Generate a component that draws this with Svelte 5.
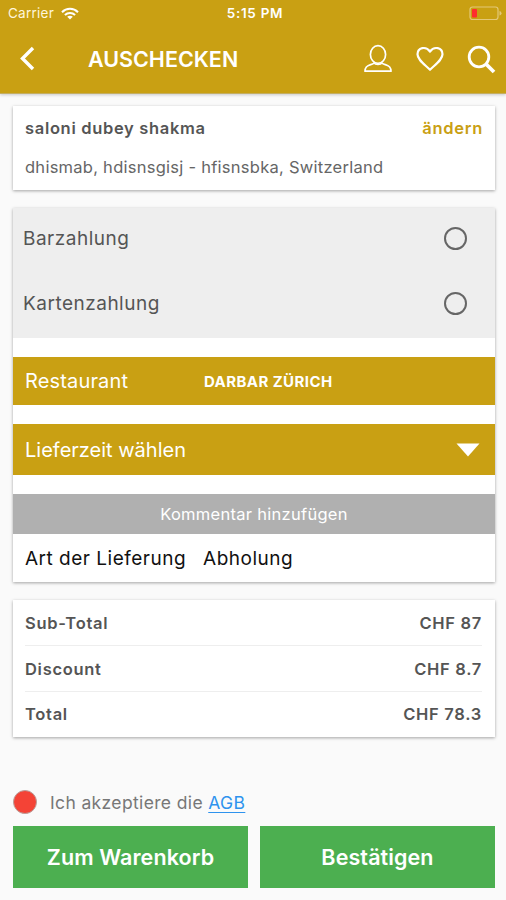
<script lang="ts">
  let payment = $state("");
  let accepted = $state(false);

  const payments = ["Barzahlung", "Kartenzahlung"];

  const totals = [
    { label: "Sub-Total", value: "CHF 87" },
    { label: "Discount", value: "CHF 8.7" },
    { label: "Total", value: "CHF 78.3" },
  ];
</script>

<div class="screen">
  <header>
    <div class="status">
      <div class="carrier">
        <span>Carrier</span>
        <svg width="18" height="13" viewBox="0 0 18 13" fill="none" stroke="#fff" stroke-width="2">
          <path d="M1 5.2C5.4 .7 12.6 .7 17 5.2" />
          <path d="M3.9 8C6.8 5.2 11.2 5.2 14.1 8" />
          <path d="M9 12.4 6.2 9.7C7.8 8.3 10.2 8.3 11.8 9.7Z" fill="#fff" stroke="none" />
        </svg>
      </div>
      <strong class="time">5:15 PM</strong>
      <svg class="battery" width="33" height="15" viewBox="0 0 33 15">
        <rect x="1" y="1" width="28" height="12.5" rx="2.5" fill="none" stroke="#e3c878" stroke-width="1.2" />
        <rect x="3" y="3" width="5" height="8.5" rx="1" fill="#ff2d2d" />
        <path d="M30.5 5v4.5q2-.6 2-2.25T30.5 5Z" fill="#e3c878" />
      </svg>
    </div>

    <div class="toolbar">
      <button class="back" aria-label="Zurück">
        <svg width="16" height="26" viewBox="0 0 16 26" fill="none" stroke="#fff" stroke-width="3.4">
          <path d="M13 2 2.500 12.500l10.500 10.500" />
        </svg>
      </button>
      <h1>AUSCHECKEN</h1>
      <nav>
        <button aria-label="Profil">
          <svg width="30" height="30" viewBox="0 0 30 30" fill="none" stroke="#fff" stroke-width="1.700">
            <ellipse cx="15" cy="10.500" rx="7.600" ry="8.800" />
            <path d="M11 19C9 21.500 2 20 2 27.200H28C28 20 21 21.500 19 19C17.500 20.800 12.500 20.800 11 19Z" stroke-linejoin="round" />
          </svg>
        </button>
        <button aria-label="Favoriten">
          <svg width="30" height="26" viewBox="0 0 30 26" fill="none" stroke="#fff" stroke-width="2.200">
            <path d="M15 23.800C9 18 2.500 13.500 2.500 8.300C2.500 1.400 11 -.2 15 5.500C19 -.2 27.500 1.400 27.500 8.300C27.500 13.500 21 18 15 23.800Z" stroke-linejoin="round" />
          </svg>
        </button>
        <button aria-label="Suche">
          <svg width="29" height="29" viewBox="0 0 29 29" fill="none" stroke="#fff">
            <circle cx="12" cy="12" r="9.800" stroke-width="2.800" />
            <path d="M19 19l8 8" stroke-width="3.800" />
          </svg>
        </button>
      </nav>
    </div>
  </header>

  <main>
    <section class="card address">
      <div class="line">
        <strong class="name">saloni dubey shakma</strong>
        <strong class="change">ändern</strong>
      </div>
      <p>dhismab, hdisnsgisj - hfisnsbka, Switzerland</p>
    </section>

    <section class="card order">
      <div class="payments">
        {#each payments as item}
          <button class="payment" onclick={() => (payment = item)}>
            <span>{item}</span>
            <i class="radio" class:active={payment === item}></i>
          </button>
        {/each}
      </div>
      <div class="restaurant">
        <span>Restaurant</span>
        <strong>DARBAR ZÜRICH</strong>
      </div>
      <button class="delivery">
        <span>Lieferzeit wählen</span>
        <svg width="24" height="14" viewBox="0 0 24 14"><path d="M.5 .5h23L12 13.500Z" fill="#fff" /></svg>
      </button>
      <button class="comment"><span>Kommentar hinzufügen</span></button>
      <div class="kind">
        <span class="kind-label">Art der Lieferung</span>
        <span class="kind-value">Abholung</span>
      </div>
    </section>

    <section class="card totals">
      {#each totals as row}
        <div class="total">
          <span>{row.label}</span>
          <span class="amount">{row.value}</span>
        </div>
      {/each}
    </section>
  </main>

  <footer>
    <div class="terms">
      <button class="check" class:accepted aria-label="AGB akzeptieren" onclick={() => (accepted = !accepted)}></button>
      <span>Ich akzeptiere die <a href="#agb">AGB</a></span>
    </div>
    <div class="actions">
      <button class="cart"><span>Zum Warenkorb</span></button>
      <button class="confirm"><span>Bestätigen</span></button>
    </div>
  </footer>
</div>

<style>
  :global(body) {
    background: #fafafa;
  }

  .screen {
    width: 506px;
    height: 900px;
    display: flex;
    flex-direction: column;
    box-sizing: border-box;
    overflow: hidden;
    background: #fafafa;
    color: #555;
    font-family: Inter, Roboto, sans-serif;
  }

  button {
    border: none;
    background: transparent;
    padding: 0;
    margin: 0;
    color: inherit;
    font: inherit;
    display: flex;
    align-items: center;
  }

  svg {
    display: block;
  }

  header {
    height: 93px;
    background: #c9a013;
    color: #fff;
    border-bottom: 1px solid #c4ae62;
    box-shadow: 0 1px 3px rgba(0, 0, 0, 0.2);
  }

  .status {
    height: 26px;
    display: grid;
    grid-template-columns: 1fr auto 1fr;
    align-items: center;
    padding: 0 4px 0 8px;
    font-size: 13px;
  }

  .carrier {
    display: flex;
    align-items: center;
    gap: 7px;
    color: #fff6dc;
    font-size: 13.5px;
    letter-spacing: 0.25px;
  }

  .time {
    font-size: 13.5px;
    font-weight: 600;
    letter-spacing: 0.7px;
  }

  .battery {
    justify-self: end;
  }

  .toolbar {
    height: 66px;
    display: flex;
    align-items: center;
    padding: 0 10px 0 20px;
  }

  h1 {
    margin: 0 0 0 52px;
    font-size: 21.5px;
    font-weight: 600;
    line-height: 30px;
  }

  nav {
    margin-left: auto;
    display: flex;
    align-items: center;
    gap: 22px;
  }

  main {
    display: flex;
    flex-direction: column;
    gap: 18px;
    padding: 12px 11px 0 13px;
  }

  .card {
    background: #fff;
    box-shadow: 0 1px 3px rgba(0, 0, 0, 0.35);
  }

  .address {
    height: 84px;
    padding: 10px 13px 0 12px;
    box-sizing: border-box;
  }

  .line {
    display: flex;
    justify-content: space-between;
    line-height: 24px;
    font-size: 16.5px;
  }

  .name {
    font-weight: 600;
    letter-spacing: 0.68px;
  }

  .change {
    font-weight: 600;
    color: #c9a013;
    letter-spacing: 0.7px;
    margin-right: -1px;
  }

  .address p {
    margin: 15px 0 0;
    font-size: 16.5px;
    line-height: 24px;
    color: #666;
    letter-spacing: 0.26px;
  }

  .order {
    height: 374px;
  }

  .payments {
    background: #eee;
    height: 130px;
    margin-bottom: 19px;
  }

  .payment {
    width: 100%;
    height: 65px;
    padding: 0 28px 5px 10px;
    justify-content: space-between;
    font-size: 19px;
    letter-spacing: 0.5px;
  }

  .radio {
    width: 23px;
    height: 23px;
    box-sizing: border-box;
    border: 2.500px solid #666;
    border-radius: 50%;
  }

  .radio.active {
    background: #c9a013;
  }

  .restaurant {
    height: 48px;
    margin-bottom: 19px;
    padding: 0 12px;
    display: flex;
    align-items: center;
    background: #c9a013;
    color: #fff;
    font-size: 20px;
    letter-spacing: 0.15px;
  }

  .restaurant span {
    width: 179px;
  }

  .restaurant strong {
    font-size: 15px;
    font-weight: 700;
    letter-spacing: 0.42px;
  }

  .delivery {
    width: 100%;
    height: 51px;
    margin-bottom: 19px;
    padding: 0 15px 0 12px;
    justify-content: space-between;
    background: #c9a013;
    color: #fff;
    font-size: 20px;
  }

  .comment {
    width: 100%;
    height: 40px;
    justify-content: center;
    background: #b0b0b0;
    color: #fff;
    font-size: 16.5px;
    letter-spacing: 0.28px;
  }

  .kind {
    height: 48px;
    padding: 0 12px;
    display: flex;
    align-items: center;
    gap: 17px;
    color: #111;
    font-size: 19px;
    letter-spacing: 0.5px;
  }

  .totals {
    height: 137px;
    box-sizing: border-box;
    padding: 0 13px 0 12px;
  }

  .total {
    height: 45px;
    display: flex;
    align-items: center;
    justify-content: space-between;
    font-size: 16.5px;
    font-weight: 600;
    letter-spacing: 0.7px;
    border-bottom: 1px solid #eee;
  }

  .total:last-child {
    height: 44px;
    border-bottom: none;
  }

  footer {
    margin-top: auto;
    padding: 0 11px 12px 13px;
  }

  .terms {
    display: flex;
    align-items: center;
    gap: 13px;
    height: 24px;
    margin-bottom: 12px;
    font-size: 17.500px;
    letter-spacing: 0.36px;
    color: #777;
  }

  .check {
    width: 24px;
    height: 24px;
    border-radius: 50%;
    background: #f44336;
    border: 1px solid #b9a09c;
  }

  .check.accepted {
    background: #4caf50;
  }

  a {
    color: #2e93ee;
    text-decoration: underline;
    text-underline-offset: 3px;
  }

  .actions {
    display: flex;
    gap: 12px;
  }

  .actions button {
    flex: 1;
    height: 62px;
    justify-content: center;
    background: #4caf50;
    color: #fff;
    font-size: 21.5px;
    font-weight: 600;
    letter-spacing: 0.1px;
  }
</style>
